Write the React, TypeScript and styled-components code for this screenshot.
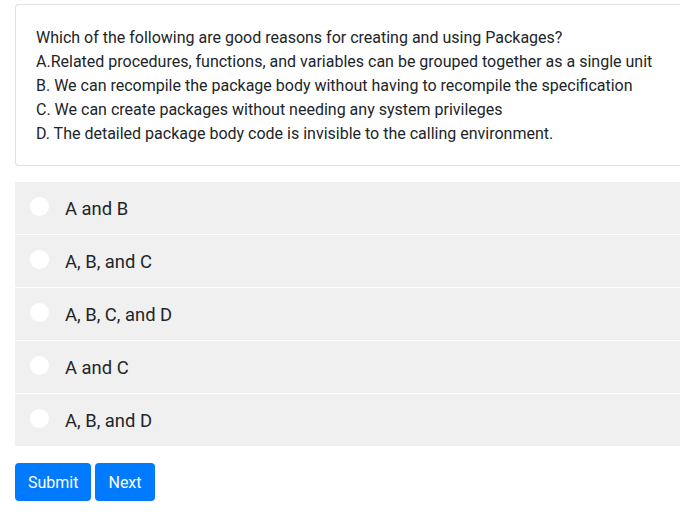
import React, { useState } from "react";
import styled, { createGlobalStyle } from "styled-components";

const GlobalStyle = createGlobalStyle`
  html, body { margin: 0; padding: 0; background: #fff; overflow: hidden; }
  body {
    font-family: Roboto, "Liberation Sans", Arial, sans-serif;
    font-size: 16px;
    line-height: 24px;
    color: #212529;
  }
`;

const Page = styled.div`
  width: 680px;
  height: 519px;
  overflow: hidden;
  padding: 4px 0 0 15px;
  box-sizing: border-box;
`;

const Column = styled.div`
  width: 700px;
  display: flex;
  flex-direction: column;
`;

const QuestionCard = styled.div`
  border: 1px solid rgba(0, 0, 0, 0.125);
  border-radius: 4px;
  padding: 21px 20px 19px;
  background: #fff;
`;

const QuestionLine = styled.p`
  margin: 0;
  white-space: nowrap;
`;

const OptionList = styled.div`
  margin-top: 16px;
  display: flex;
  flex-direction: column;
  gap: 1px;
`;

const OptionRow = styled.label`
  display: flex;
  align-items: flex-start;
  gap: 16px;
  height: 52px;
  box-sizing: border-box;
  padding: 14px 15px;
  background: #f0f0f0;
  cursor: pointer;
`;

const RadioDot = styled.span<{ checked: boolean }>`
  flex: none;
  width: 19px;
  height: 19px;
  margin-top: 1px;
  border-radius: 50%;
  background: ${(p) => (p.checked ? "#007bff" : "#fff")};
  box-shadow: ${(p) => (p.checked ? "inset 0 0 0 5px #fff" : "none")};
`;

const OptionText = styled.span`
  font-size: 18.4px;
  line-height: 25px;
`;

const ButtonRow = styled.div`
  margin-top: 17px;
  display: flex;
  gap: 4px;
`;

const Button = styled.button`
  font-family: inherit;
  font-size: 16px;
  line-height: 24px;
  padding: 8px 13px 6px;
  border: none;
  border-radius: 4px;
  background: #007bff;
  color: #fff;
  cursor: pointer;
`;

const lines = [
  "Which of the following are good reasons for creating and using Packages?",
  "A.Related procedures, functions, and variables can be grouped together as a single unit",
  "B. We can recompile the package body without having to recompile the specification",
  "C. We can create packages without needing any system privileges",
  "D. The detailed package body code is invisible to the calling environment.",
];

const options = ["A and B", "A, B, and C", "A, B, C, and D", "A and C", "A, B, and D"];

export default function App() {
  const [selected, setSelected] = useState<number | null>(null);
  return (
    <Page>
      <GlobalStyle />
      <Column>
        <QuestionCard>
          {lines.map((l) => (
            <QuestionLine key={l}>{l}</QuestionLine>
          ))}
        </QuestionCard>
        <OptionList>
          {options.map((o, i) => (
            <OptionRow key={o} onClick={() => setSelected(i)}>
              <RadioDot checked={selected === i} />
              <OptionText>{o}</OptionText>
            </OptionRow>
          ))}
        </OptionList>
        <ButtonRow>
          <Button>Submit</Button>
          <Button>Next</Button>
        </ButtonRow>
      </Column>
    </Page>
  );
}
